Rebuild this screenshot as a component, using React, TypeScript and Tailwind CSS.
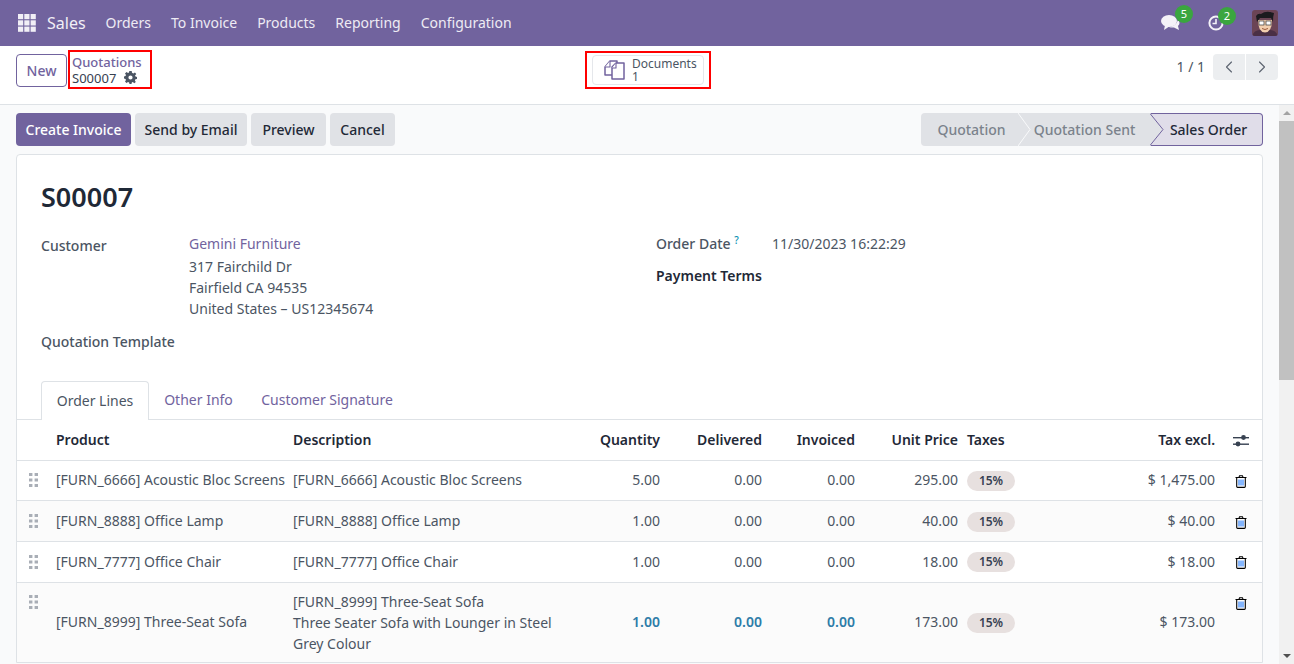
import { ChevronLeft, ChevronRight } from 'lucide-react'
import React from 'react'

const font = { fontFamily: '"Noto Sans", sans-serif' }

const menus = ['Orders', 'To Invoice', 'Products', 'Reporting', 'Configuration']

const rows = [
  { product: '[FURN_6666] Acoustic Bloc Screens', qty: '5.00', price: '295.00', total: '$ 1,475.00' },
  { product: '[FURN_8888] Office Lamp', qty: '1.00', price: '40.00', total: '$ 40.00' },
  { product: '[FURN_7777] Office Chair', qty: '1.00', price: '18.00', total: '$ 18.00' },
]

const Trash = () => (
  <svg width="12" height="13" viewBox="0 0 12 13" className="text-black">
    <path d="M4 2 L4.6 .7 H7.4 L8 2 M.5 2.5 H11.5 M1.7 2.5 V11.5 Q1.7 12.4 2.6 12.4 H9.4 Q10.3 12.4 10.3 11.5 V2.5" fill="none" stroke="currentColor" strokeWidth="1.1" />
    <path d="M4 4.5 V10.5 M6 4.5 V10.5 M8 4.5 V10.5" stroke="#0d6efd" strokeWidth="1" />
  </svg>
)

const Handle = () => (
  <svg width="9" height="14" viewBox="0 0 9 14" fill="#a9aeb6">
    <rect x="0" y="0" width="3.4" height="3" /><rect x="5.6" y="0" width="3.4" height="3" />
    <rect x="0" y="5.5" width="3.4" height="3" /><rect x="5.6" y="5.5" width="3.4" height="3" />
    <rect x="0" y="11" width="3.4" height="3" /><rect x="5.6" y="11" width="3.4" height="3" />
  </svg>
)

const Badge = () => (
  <span className="inline-flex h-5 w-12 items-center justify-center rounded-full bg-[#e7e0df] text-xs font-semibold text-[#374151]">15%</span>
)

export default function App() {
  return (
    <div style={font} className="flex h-[664px] w-[1294px] flex-col overflow-hidden bg-white text-sm text-[#4b5563]">
      {/* navbar */}
      <div className="flex h-[46px] shrink-0 items-center bg-[#71639e] text-white">
        <svg width="18" height="18" viewBox="0 0 18 18" fill="#f1eff6" className="ml-[18px]">
          {[0, 6.3, 12.6].map((y) => [0, 6.3, 12.6].map((x) => <rect key={`${x}-${y}`} x={x} y={y} width="5.2" height="5.2" />))}
        </svg>
        <span className="ml-[11px] text-base text-[#f1eff6]">Sales</span>
        <div className="ml-5 flex gap-5 text-[#eeebf4]">
          {menus.map((m) => <span key={m}>{m}</span>)}
        </div>
        <div className="ml-auto flex items-center pr-[16px]">
          <div className="relative mr-[27px]">
            <svg width="20" height="18" viewBox="0 0 20 18" fill="#f4f2f8">
              <ellipse cx="8" cy="7" rx="8" ry="6" />
              <path d="M4 11 L3 16 L9 12 Z" />
              <path d="M17 6 Q20 9 17 12 L18 16 L13 13.5 Q9 13.5 8 13 Q15 12 17 6Z" />
            </svg>
            <span className="absolute -right-[12px] -top-[9px] flex h-[18px] w-[18px] items-center justify-center rounded-full bg-[#3aa63f] text-[11px] text-white">5</span>
          </div>
          <div className="relative mr-[28px]">
            <svg width="16" height="16" viewBox="0 0 16 16" fill="none" stroke="#f4f2f8" strokeWidth="2">
              <circle cx="8" cy="8" r="6.6" />
              <path d="M8 4 V8.5 H4.5" strokeWidth="1.6" />
            </svg>
            <span className="absolute -right-[12px] -top-[8px] flex h-[18px] w-[18px] items-center justify-center rounded-full bg-[#3aa63f] text-[11px] text-white">2</span>
          </div>
          <svg width="26" height="26" viewBox="0 0 26 26" className="rounded-[3px]">
            <rect width="26" height="26" fill="#6b4455" />
            <path d="M0 26 Q2 20 8 20 H18 Q24 20 26 26Z" fill="#4a2f45" />
            <path d="M6 10 Q6 22 13 22.5 Q20 22 20 10Z" fill="#f3cfae" />
            <path d="M5 12 L4 6 Q6 3 9 4 Q14 0 22 3 Q21 6 21 12 L19 8 H8 Z" fill="#1b1b1f" />
            <rect x="7" y="11" width="5" height="4" fill="#fff" stroke="#333" strokeWidth=".7" />
            <rect x="14" y="11" width="5" height="4" fill="#fff" stroke="#333" strokeWidth=".7" />
            <path d="M10 18.5 Q13 20.5 16 18.5" fill="none" stroke="#9c5a3c" strokeWidth="1" />
          </svg>
        </div>
      </div>

      {/* control panel */}
      <div className="flex h-[59px] shrink-0 items-start border-b border-[#dee2e6] bg-white">
        <button className="ml-4 mt-2 h-[33px] w-[51px] rounded border border-[#71639e] font-medium text-[#71639e]">New</button>
        <div className="ml-[1px] mt-[4px] flex h-[39px] w-[84px] flex-col justify-center border-2 border-[#ff0000] pl-[2px] leading-4">
          <span className="text-[13px] font-medium text-[#71639e]">Quotations</span>
          <span className="flex items-center gap-2 text-[13px] text-[#374151]">
            S00007
            <svg width="13" height="13" viewBox="0 0 13 13" fill="#4b5563">
              <path fillRule="evenodd" d="M5.3 0 H7.7 L8 1.8 L9.3 2.4 L10.9 1.4 L12.3 3 L11 4.4 L11.5 5.5 L13 5.9 V7.9 L11.4 8.3 L10.9 9.4 L11.8 11 L10.2 12.3 L8.9 11.1 L7.8 11.5 L7.5 13 H5.5 L5.1 11.5 L4 11 L2.5 12 L1 10.4 L2 9 L1.5 7.9 L0 7.5 V5.5 L1.5 5.1 L2 4 L1 2.6 L2.6 1.1 L4 2 L5 1.6 Z M6.5 4.4 A2.1 2.1 0 1 0 6.5 8.6 A2.1 2.1 0 1 0 6.5 4.4 Z" />
            </svg>
          </span>
        </div>
        <div className="ml-[433px] mt-[5px] flex h-[38px] w-[126px] items-center justify-center border-2 border-[#ff0000]">
          <div className="flex h-[30px] w-[112px] items-center rounded border border-[#e5e7eb] pl-[11px]">
            <svg width="22" height="22" viewBox="0 0 22 22" fill="#fff" stroke="#71639e" strokeWidth="1.5" strokeLinejoin="round">
              <path d="M1 8 L6 2 H13 V16 H1 Z" />
              <path d="M8 8 L12 4 H20 V20 H8 Z" />
              <path d="M1 8 H6 V2 M8 9 H12 V4" strokeWidth="1.1" />
            </svg>
            <div className="ml-[6px] flex flex-col text-xs leading-[13px] text-[#4b5563]">
              <span>Documents</span>
              <span>1</span>
            </div>
          </div>
        </div>
        <div className="ml-auto mr-4 mt-2 flex items-center">
          <span className="mr-[8px] text-[#4b5563]">1 / 1</span>
          <div className="flex h-[26px] overflow-hidden rounded">
            <span className="flex w-8 items-center justify-center bg-[#eceef0] text-[#5f6672]"><ChevronLeft size={20} strokeWidth={1.4} /></span>
            <span className="ml-px flex w-8 items-center justify-center bg-[#eceef0] text-[#5f6672]"><ChevronRight size={20} strokeWidth={1.4} /></span>
          </div>
        </div>
      </div>

      {/* content + scrollbar */}
      <div className="flex min-h-0 flex-1">
        <div className="min-w-0 flex-1 overflow-hidden bg-[#f9fafb] px-4 pt-2">
          <div className="flex items-center">
            <div className="flex h-[33px] gap-1 font-medium">
              <button className="w-[115px] rounded bg-[#71639e] text-white">Create Invoice</button>
              <button className="w-[112px] rounded bg-[#e0e2e6] text-[#1f2937]">Send by Email</button>
              <button className="w-[75px] rounded bg-[#e0e2e6] text-[#1f2937]">Preview</button>
              <button className="w-[65px] rounded bg-[#e0e2e6] text-[#1f2937]">Cancel</button>
            </div>
            <div className="ml-auto flex h-[33px] font-medium">
              <svg width="342" height="33" viewBox="0 0 342 33" className="hidden" />
              <span className="flex w-[97px] items-center justify-center rounded-l bg-[#e0e2e6] pl-1 text-[#7b828c]">Quotation</span>
              <span className="relative flex w-[133px] items-center justify-center bg-[#e0e2e6] text-[#7b828c]">
                <svg width="14" height="33" viewBox="0 0 14 33" className="absolute left-0 top-0">
                  <path d="M0 0 L12 16.5 L0 33" fill="none" stroke="#f9fafb" strokeWidth="1" />
                </svg>
                Quotation Sent
              </span>
              <span className="relative flex w-[112px] items-center justify-center rounded-r border-y border-r border-[#71639e] bg-[#e0dde9] pl-1 text-[#1f2937]">
                <svg width="14" height="33" viewBox="0 0 14 33" className="absolute -left-px -top-px">
                  <path d="M0 0 L13 16.5 L0 33 Z" fill="#e0e2e6" />
                  <path d="M0 .5 L13 16.5 L0 32.5" fill="none" stroke="#71639e" strokeWidth="1" />
                </svg>
                Sales Order
              </span>
            </div>
          </div>

          <div className="mt-2 rounded-t border border-[#dee2e6] bg-white pt-[26px]">
            <h1 className="ml-6 text-[27px] font-semibold leading-[32px] text-[#1f2937]">S00007</h1>

            <div className="mt-[20px] flex pl-6">
              <div className="w-[615px]">
                <div className="flex">
                  <span className="w-[148px] pt-[3px] font-medium text-[#4b5563]">Customer</span>
                  <div className="flex flex-col leading-[21px]">
                    <span className="text-[#71639e]">Gemini Furniture</span>
                    <span className="mt-[2px]">317 Fairchild Dr</span>
                    <span>Fairfield CA 94535</span>
                    <span>United States – US12345674</span>
                  </div>
                </div>
                <div className="mt-[13px] font-medium text-[#4b5563]">Quotation Template</div>
              </div>
              <div className="text-[#4b5563]">
                <div className="flex items-start pt-[1px]">
                  <span className="w-[116px] font-medium">Order Date <sup className="text-[10px] text-[#0891b2]">?</sup></span>
                  <span>11/30/2023 16:22:29</span>
                </div>
                <div className="mt-3 font-semibold text-[#1f2937]">Payment Terms</div>
              </div>
            </div>

            <div className="mt-[29px] flex h-[39px] items-end border-b border-[#dee2e6] pl-6">
              <span className="-mb-px flex h-[39px] w-[108px] items-center justify-center rounded-t border-x border-t border-[#dee2e6] bg-white text-[#4b5563]">Order Lines</span>
              <span className="flex h-[38px] w-[99px] items-center justify-center text-[#71639e]">Other Info</span>
              <span className="flex h-[38px] w-[158px] items-center justify-center text-[#71639e]">Customer Signature</span>
            </div>

            <table className="w-full table-fixed border-collapse">
              <colgroup>
                <col className="w-[34px]" />
                <col className="w-[237px]" />
                <col className="w-[280px]" />
                <col className="w-[97px]" />
                <col className="w-[102px]" />
                <col className="w-[93px]" />
                <col className="w-[103px]" />
                <col className="w-[100px]" />
                <col className="w-[157px]" />
                <col />
              </colgroup>
              <thead>
                <tr className="h-10 border-b border-[#dee2e6] font-semibold text-[#1f2937]">
                  <th />
                  <th className="pl-[5px] text-left font-semibold">Product</th>
                  <th className="pl-[5px] text-left font-semibold">Description</th>
                  <th className="pr-[5px] text-right font-semibold">Quantity</th>
                  <th className="pr-[5px] text-right font-semibold">Delivered</th>
                  <th className="pr-[5px] text-right font-semibold">Invoiced</th>
                  <th className="pr-[5px] text-right font-semibold">Unit Price</th>
                  <th className="pl-1 text-left font-semibold">Taxes</th>
                  <th className="pr-[5px] text-right font-semibold">Tax excl.</th>
                  <th className="text-center">
                    <svg width="16" height="14" viewBox="0 0 16 14" fill="#374151" className="inline">
                      <rect x="0" y="3" width="16" height="1.4" /><circle cx="10.5" cy="3.5" r="2.4" />
                      <rect x="0" y="9.5" width="16" height="1.4" /><circle cx="5" cy="10" r="2.4" />
                    </svg>
                  </th>
                </tr>
              </thead>
              <tbody>
                {rows.map((r, i) => (
                  <tr key={r.product} className={`h-[40.7px] border-b border-[#dee2e6] ${i % 2 === 1 ? 'bg-[#fbfbfb]' : 'bg-white'}`}>
                    <td className="pl-[12px]"><Handle /></td>
                    <td className="truncate pl-[5px]">{r.product}</td>
                    <td className="pl-[5px]">{r.product}</td>
                    <td className="pr-[5px] text-right">{r.qty}</td>
                    <td className="pr-[5px] text-right">0.00</td>
                    <td className="pr-[5px] text-right">0.00</td>
                    <td className="pr-[5px] text-right">{r.price}</td>
                    <td className="pl-1"><Badge /></td>
                    <td className="pr-[5px] text-right">{r.total}</td>
                    <td className="text-center"><span className="inline-block align-middle"><Trash /></span></td>
                  </tr>
                ))}
                <tr className="h-[80px] bg-[#fbfbfb]">
                  <td className="pl-[12px] pt-[12px] align-top"><Handle /></td>
                  <td className="pl-[5px]">[FURN_8999] Three-Seat Sofa</td>
                  <td className="pl-[5px] leading-[21px]">
                    [FURN_8999] Three-Seat Sofa<br />Three Seater Sofa with Lounger in Steel<br />Grey Colour
                  </td>
                  <td className="pr-[5px] text-right font-semibold text-[#2e7ca8]">1.00</td>
                  <td className="pr-[5px] text-right font-semibold text-[#2e7ca8]">0.00</td>
                  <td className="pr-[5px] text-right font-semibold text-[#2e7ca8]">0.00</td>
                  <td className="pr-[5px] text-right">173.00</td>
                  <td className="pl-1"><Badge /></td>
                  <td className="pr-[5px] text-right">$ 173.00</td>
                  <td className="pt-[12px] text-center align-top"><span className="inline-block"><Trash /></span></td>
                </tr>
              </tbody>
            </table>
          </div>
        </div>

        {/* scrollbar */}
        <div className="flex w-[15px] shrink-0 flex-col items-center bg-[#f1f1f1]">
          <div className="flex h-[16px] items-center justify-center">
            <span className="h-0 w-0 border-x-[4px] border-b-[4px] border-x-transparent border-b-[#a3a3a3]" />
          </div>
          <div className="h-[259px] w-full bg-[#c1c1c1]" />
          <div className="mt-auto flex h-[16px] items-center justify-center">
            <span className="h-0 w-0 border-x-[4px] border-t-[4px] border-x-transparent border-t-[#505050]" />
          </div>
        </div>
      </div>
    </div>
  )
}
